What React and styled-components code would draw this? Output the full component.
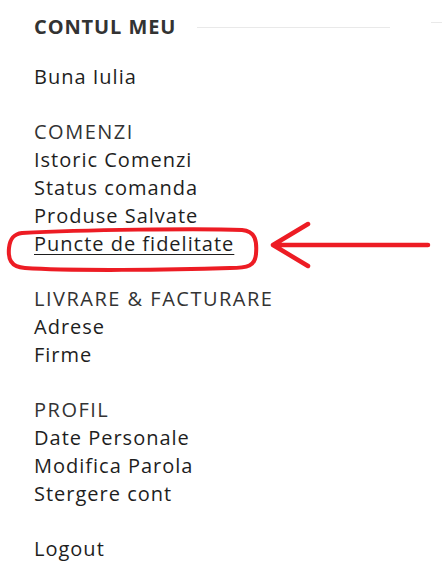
import React from "react";
import styled, { createGlobalStyle } from "styled-components";

const Global = createGlobalStyle`
  html, body { margin: 0; padding: 0; background: #fff; }
  body { font-family: "Open Sans", "Liberation Sans", sans-serif; overflow: hidden; }
`;

const Page = styled.div`
  width: 442px;
  height: 579px;
  padding: 14px 0 0 34px;
  box-sizing: border-box;
  overflow: hidden;
`;

const Header = styled.div`
  display: flex;
  align-items: center;
  height: 26px;
`;

const Title = styled.h2`
  margin: 0;
  font-size: 20px;
  font-weight: 700;
  color: #333;
  line-height: 26px;
  white-space: nowrap;
  letter-spacing: 0.9px;
`;

const Rule = styled.span`
  display: block;
  height: 1px;
  background: #e9e9e9;
  flex: none;
  width: ${(p) => p.$w}px;
  margin-left: ${(p) => p.$ml}px;
  align-self: ${(p) => (p.$up ? "flex-start" : "center")};
  margin-top: ${(p) => (p.$up ? "8px" : "0")};
`;

const Menu = styled.nav`
  display: flex;
  flex-direction: column;
  gap: 27px;
  margin-top: 23px;
`;

const Group = styled.div`
  display: flex;
  flex-direction: column;
`;

const GroupTitle = styled.div`
  font-size: 20px;
  line-height: 28px;
  color: #333;
  letter-spacing: 1.5px;
  text-transform: uppercase;
  white-space: nowrap;
`;

const Item = styled.a`
  position: relative;
  align-self: flex-start;
  font-size: 20px;
  line-height: 28px;
  letter-spacing: 1px;
  color: #1e1e1e;
  white-space: nowrap;
  text-decoration: ${(p) => (p.$active ? "underline" : "none")};
  text-decoration-thickness: 1px;
  text-underline-offset: 3px;
  cursor: pointer;
`;

const Annotation = styled.svg`
  position: absolute;
  left: -34px;
  top: -28px;
  width: 442px;
  height: 80px;
  overflow: visible;
  pointer-events: none;
`;

const RED = "#ed1c24";

function Highlight() {
  // coordinates: page x, page y - 200
  return (
    <Annotation viewBox="0 0 442 80">
      <path
        d="M 22 31 C 80 28, 200 26, 242 28 C 256 29, 257 40, 256 52 C 255 64, 248 66, 230 66 C 170 68, 70 69, 25 66 C 10 65, 8 56, 9 46 C 10 36, 14 32, 22 31 Z"
        fill="none"
        stroke={RED}
        strokeWidth="4"
        strokeLinejoin="round"
      />
      <path
        d="M 428 43 L 274 43 M 308 22 L 273 43 L 308 64"
        fill="none"
        stroke={RED}
        strokeWidth="4.5"
        strokeLinecap="round"
        strokeLinejoin="round"
      />
    </Annotation>
  );
}

const groups = [
  { title: "Comenzi", items: ["Istoric Comenzi", "Status comanda", "Produse Salvate", "Puncte de fidelitate"], active: "Puncte de fidelitate" },
  { title: "Livrare & Facturare", items: ["Adrese", "Firme"] },
  { title: "Profil", items: ["Date Personale", "Modifica Parola", "Stergere cont"] },
];

export default function App() {
  return (
    <>
      <Global />
      <Page>
        <Header>
          <Title>CONTUL MEU</Title>
          <Rule $w={193} $ml={21} />
          <Rule $w={20} $ml={41} $up />
        </Header>
        <Menu>
          <Group>
            <Item>Buna Iulia</Item>
          </Group>
          {groups.map((g) => (
            <Group key={g.title}>
              <GroupTitle>{g.title}</GroupTitle>
              {g.items.map((it) => (
                <Item key={it} $active={it === g.active}>
                  {it}
                  {it === g.active && <Highlight />}
                </Item>
              ))}
            </Group>
          ))}
          <Group>
            <Item>Logout</Item>
          </Group>
        </Menu>
      </Page>
    </>
  );
}
